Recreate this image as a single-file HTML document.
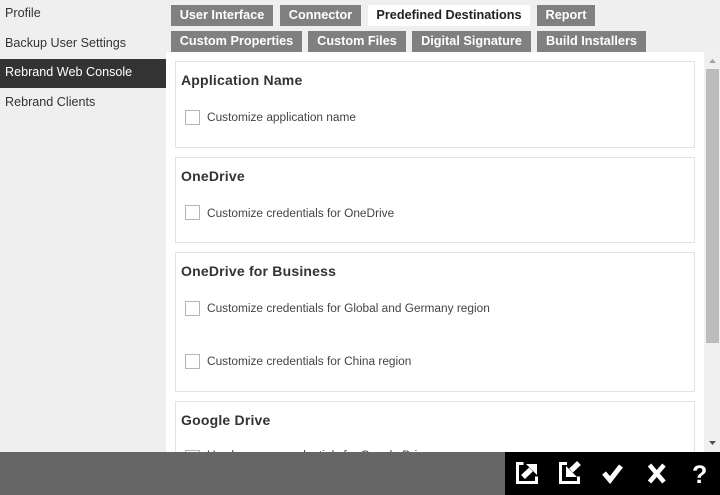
<!DOCTYPE html>
<html><head><meta charset="utf-8"><style>
html,body{margin:0;padding:0}
body{width:720px;height:495px;overflow:hidden;position:relative;background:#efefef;font-family:"Liberation Sans",Arial,sans-serif}
div{position:absolute;box-sizing:border-box;white-space:nowrap}
.nav{left:5px;font-size:12.6px;color:#333;line-height:16px}
.tab{height:21px;background:#808080;color:#fff;font-weight:bold;font-size:12.7px;line-height:20px;text-align:center}
.box{left:175px;width:520px;border:1px solid #e3e3e3;background:#fff}
.h{left:181px;font-weight:bold;font-size:14px;color:#333;letter-spacing:.2px;line-height:16px}
.cb{left:185px;width:15px;height:15px;border:1px solid #b5b5b5;background:#fff}
.t{left:207px;font-size:11.87px;color:#444;line-height:16px}
</style></head><body>
<div class="nav" style="top:5px">Profile</div>
<div class="nav" style="top:35px">Backup User Settings</div>
<div style="left:0;top:59px;width:166px;height:29px;background:#333"></div>
<div class="nav" style="top:64px;color:#fff">Rebrand Web Console</div>
<div class="nav" style="top:94px">Rebrand Clients</div>

<div class="tab" style="left:171px;top:5px;width:102px">User Interface</div>
<div class="tab" style="left:280px;top:5px;width:81px">Connector</div>
<div class="tab" style="left:368px;top:5px;width:162px;background:#fff;color:#222">Predefined Destinations</div>
<div class="tab" style="left:537px;top:5px;width:58px">Report</div>
<div class="tab" style="left:171px;top:31px;width:131px">Custom Properties</div>
<div class="tab" style="left:308px;top:31px;width:98px">Custom Files</div>
<div class="tab" style="left:412px;top:31px;width:119px">Digital Signature</div>
<div class="tab" style="left:537px;top:31px;width:109px">Build Installers</div>

<div style="left:166px;top:52px;width:538px;height:400px;background:#fff"></div>
<div class="box" style="top:61px;height:87px"></div>
<div class="box" style="top:157px;height:86px"></div>
<div class="box" style="top:252px;height:140px"></div>
<div class="box" style="top:401px;height:70px"></div>

<div class="h" style="top:72px">Application Name</div>
<div class="cb" style="top:110px"></div>
<div class="t" style="top:109px">Customize application name</div>
<div class="h" style="top:168px">OneDrive</div>
<div class="cb" style="top:205px"></div>
<div class="t" style="top:205px">Customize credentials for OneDrive</div>
<div class="h" style="top:263px">OneDrive for Business</div>
<div class="cb" style="top:301px"></div>
<div class="t" style="top:300px">Customize credentials for Global and Germany region</div>
<div class="cb" style="top:354px"></div>
<div class="t" style="top:353px">Customize credentials for China region</div>
<div class="h" style="top:412px">Google Drive</div>
<div class="cb" style="top:450px"></div>
<div class="t" style="top:447px">Use le xxxxxx credentials for Google Drive</div>

<div style="left:704px;top:52px;width:16px;height:400px;background:#f0f0f0"></div>
<div style="left:706px;top:69px;width:13px;height:274px;background:#bcbcbc"></div>
<svg style="position:absolute;left:704px;top:52px" width="16" height="400"><path d="M8.500 7l3.500 4h-7z" fill="#a3a3a3"/><path d="M5 389h7l-3.500 4z" fill="#505050"/></svg>

<div style="left:0;top:452px;width:505px;height:43px;background:#666"></div>
<div style="left:505px;top:452px;width:215px;height:43px;background:#000"></div>
<svg style="position:absolute;left:505px;top:452px" width="215" height="43" fill="none" stroke="#fff">
<path d="M18.500 11.500h-6v19h19v-6" stroke-width="3"/>
<path d="M18 25l8-7.500" stroke-width="5.500"/><path d="M21 12h11v11z" fill="#fff" stroke="none"/>
<path d="M62 11.500h-6.500v19h18v-6" stroke-width="3"/>
<path d="M74 11l-8 7.500" stroke-width="5.500"/><path d="M61 25V14l11 11z" fill="#fff" stroke="none"/>
<path d="M99 21l6 7L116 14" stroke-width="5"/>
<path d="M144.500 13l14.500 17M159 13l-14.500 17" stroke-width="4.500"/>
<text x="187" y="31" font-family="Liberation Sans" font-weight="bold" font-size="25" fill="#fff" stroke="none">?</text>
</svg>
</body></html>
